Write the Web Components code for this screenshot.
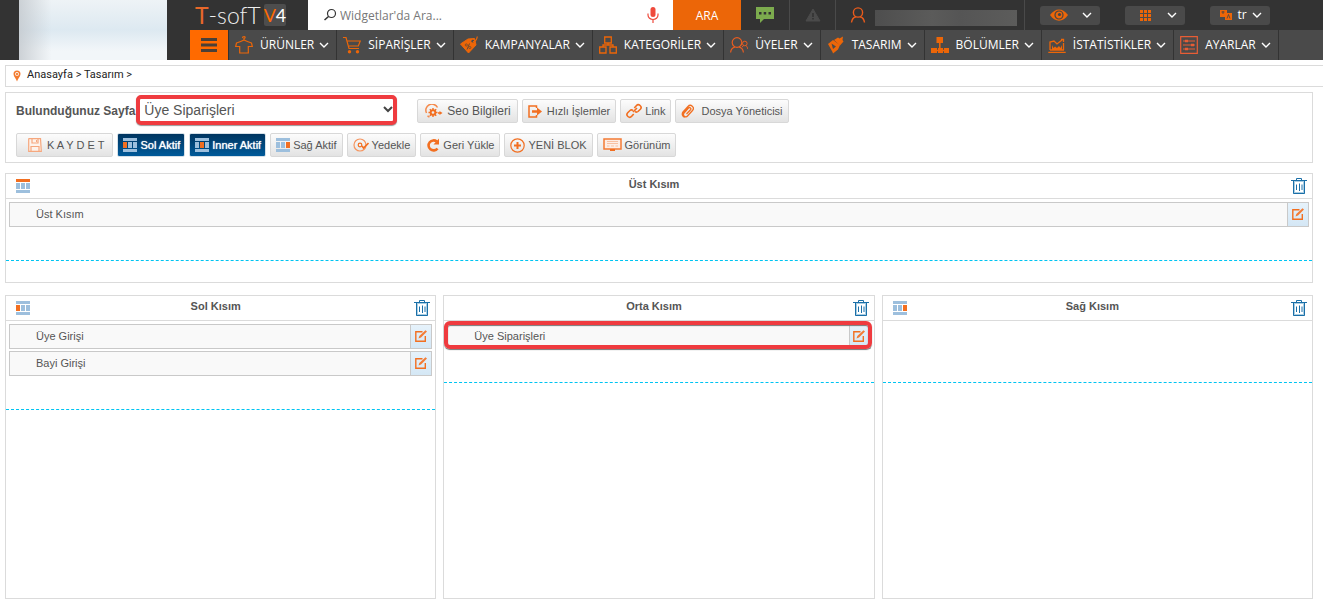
<!DOCTYPE html>
<html lang="tr">
<head>
<meta charset="utf-8">
<title>Tasarım - T-Soft V4</title>
<style>
  html, body { margin: 0; }
  body {
    font-family: "Liberation Sans", Arial, sans-serif;
    font-size: 11px;
    color: #555;
    background: #fff;
  }
</style>
</head>
<body>
<design-page></design-page>

<script>
const ICONS = {
  chevron: ['0 0 10 6', '<path d="M1 1l4 4 4-4" fill="none" stroke="#fff" stroke-width="1.4"/>'],
  search: ['0 0 14 14', '<circle cx="8.500" cy="5.500" r="4" fill="none" stroke="#333" stroke-width="1.200"/><path d="M5.500 8.500L1.500 12" stroke="#333" stroke-width="1.600"/>'],
  mic: ['0 0 12 16', '<rect x="3.5" y="0" width="5" height="10" rx="2.5" fill="#ef4a3c"/><path d="M1 6.5v1.5a5 4.5 0 0 0 10 0V6.500M6 12.500V16" fill="none" stroke="#ef4a3c" stroke-width="1.2"/>'],
  chat: ['0 0 18 16', '<path d="M0 0h18v12H8l-4 4v-4H0z" fill="#7cab4e"/><path d="M3 5h2.500v2.500H3zM7.700 5h2.500v2.500H7.700zM12.500 5H15v2.500h-2.500z" fill="#333"/>'],
  alert: ['0 0 16 14', '<path d="M8 1l7 12H1z" fill="#4b4b4b" stroke="#4b4b4b" stroke-width="1"/><path d="M7.200 5h1.600v4H7.200zM7.200 10h1.600v1.600H7.200z" fill="#333"/>'],
  user: ['0 0 16 16', '<circle cx="8" cy="5.500" r="4.600" fill="none" stroke="#ea5b1b" stroke-width="1.400"/><path d="M1.500 15.500c.5-4 3-5.500 4.500-5.800M14.500 15.500c-.5-4-3-5.500-4.500-5.800" fill="none" stroke="#ea5b1b" stroke-width="1.400"/>'],
  eye: ['0 0 18 12', '<path d="M0 6C5-1.500 13-1.500 18 6 13 13.500 5 13.500 0 6z" fill="#ec6608"/><circle cx="9" cy="6" r="4" fill="none" stroke="#444" stroke-width="1.200"/><circle cx="9.500" cy="5.500" r="1.600" fill="#444"/>'],
  grid: ['0 0 11 11', '<path d="M0 0h3v3H0zM4 0h3v3H4zM8 0h3v3H8zM0 4h3v3H0zM4 4h3v3H4zM8 4h3v3H8zM0 8h3v3H0zM4 8h3v3H4zM8 8h3v3H8z" fill="#ec6608"/>'],
  lang: ['0 0 12 10', '<path d="M0 0h7v7H0zM5 3h7v7H5z" fill="#ec6608"/><path d="M1.500 2h3M3 1v3M7 8.500l1.500-4 1.500 4" fill="none" stroke="#444" stroke-width=".8"/>'],
  menu: ['0 0 16 14', '<path d="M0 0h16v3H0zM0 5.500h16v3H0zM0 11h16v3H0z" fill="#4a4038"/>'],
  shirt: ['0 0 18 18', '<path d="M9 4C7 5 6 5.500 1.500 7L.7 10.500h4V17h8.600v-6.500h4L16.500 7C12 5.500 11 5 9 4zM9 4V2.500c1.500-.3 1.500-2-.2-1.900-1 0-1.300.8-1.100 1.400" fill="none" stroke="#ec6608" stroke-width="1.200"/>'],
  cart: ['0 0 18 18', '<path d="M0 1.500h3L6 12.500h10M4 5h13.300l-2 5H6" fill="none" stroke="#ec6608" stroke-width="1.200"/><circle cx="6.500" cy="15.700" r="1.700" fill="#ec6608"/><circle cx="14.500" cy="15.700" r="1.700" fill="#ec6608"/>'],
  tag: ['0 0 18 18', '<path d="M.5 8L8 3l6.500-.500L16 9 8.500 17z" fill="#ec6608" stroke="#ec6608"/><circle cx="12.800" cy="5.200" r="1.400" fill="#4a4a4a"/><path d="M13 5.500c2 .5 4-2 4.300-5" fill="none" stroke="#ec6608" stroke-width="1.200"/><path d="M9.500 7.500l-2.500 6" stroke="#6a4a30" stroke-width="1"/><circle cx="6.300" cy="9" r="1.100" fill="none" stroke="#6a4a30" stroke-width=".8"/><circle cx="9.800" cy="11.500" r="1.100" fill="none" stroke="#6a4a30" stroke-width=".8"/>'],
  boxes: ['0 0 18 18', '<path d="M5.700 1h6.600v6H5.700zM.7 11h6.300v6H.7zM11 11h6.300v6H11zM9 7v2M4 11V9h10v2" fill="none" stroke="#ec6608" stroke-width="1.300"/>'],
  users: ['0 0 18 18', '<circle cx="7" cy="6.500" r="4.800" fill="none" stroke="#e85d20" stroke-width="1.200"/><path d="M.6 16.500c.3-3.500 2.500-5 4.400-5.600M13.400 16.500c-.3-3.500-2.500-5-4.400-5.600" fill="none" stroke="#e85d20" stroke-width="1.200"/><circle cx="14.800" cy="7.500" r="2.300" fill="none" stroke="#e85d20"/><path d="M13.500 9.800l-1.500 1.200M16 9.800c1 .5 1.500 1.500 1.600 3" fill="none" stroke="#e85d20"/>'],
  brush: ['0 0 18 18', '<path d="M1 8l5-4 7 5-2 4.500L6 17.500l-.500-1.500z" fill="#ec6608"/><path d="M7 4l4-2.500 1.500 1L16 .5 15.500 4l1 1.500-3.500 4z" fill="#ec6608"/><path d="M4.500 7.500L9 10.500 6 13z" fill="#4a4a4a"/>'],
  tree: ['0 0 18 18', '<path d="M5.500 1h6.500v6H5.500zM0 12h6v5H0zM7 12h5v5H7zM13 12h5v5h-5z" fill="#ec6608"/><path d="M8.800 7v6M3 14.500h12" stroke="#ec6608" stroke-width="1.600"/>'],
  chart: ['0 0 18 18', '<path d="M2 14V6l4-1 3 3 5-4M13 3.500h2.500V6M15.500 7v7M2 14h14M.3 16.300h17.400" fill="none" stroke="#ec6608" stroke-width="1.300"/><path d="M4 14V9l1.500 3L7 10.500 9 12l2-2 1.500 2L14 9v5z" fill="#ec6608"/>'],
  sliders: ['0 0 18 18', '<path d="M.7.7h16.600v16.600H.7zM3 5h12M3 9h12M3 13h12" fill="none" stroke="#e85d35" stroke-width="1.200"/><path d="M5 3.700h3v2.600H5zM11 7.700h3v2.600h-3zM5 11.700h3v2.600H5z" fill="#e85d35"/>'],
  pin: ['0 0 8 12', '<path d="M4 11.500C3.500 9 .5 6.500.5 4a3.500 3.500 0 0 1 7 0C7.500 6.500 4.500 9 4 11.500z" fill="#f47b30"/><circle cx="4" cy="3.900" r="1.900" fill="#fff"/><circle cx="4" cy="3.900" r="1" fill="#ec6608"/>'],
  seo: ['0 0 18 14', '<path d="M1.500 9A5.800 5.800 0 0 1 12.500 3.500M2.500 12l2 1" fill="none" stroke="#f58a4c" stroke-width="1.500"/><circle cx="8" cy="8.500" r="2.300" fill="none" stroke="#f26f21" stroke-width="1.900"/><path d="M8 4v2M8 11v2M3.500 8.500h2M10.500 8.500h2M4.800 5.300l1.500 1.500M11.200 5.300L9.700 6.800M4.800 11.700l1.500-1.500M11.200 11.700l-1.500-1.500M13 9h3" stroke="#f26f21" stroke-width="1.400"/><path d="M14.500 7l3 2-3 2z" fill="#f26f21"/>'],
  exit: ['0 0 14 13', '<path d="M8.500 3V1H1v11h7.500v-2" fill="none" stroke="#f26f21" stroke-width="1.500"/><path d="M4 5.200h5V2.500l5 4-5 4V7.800H4z" fill="#f26f21"/>'],
  link: ['0 0 16 16', '<path d="M7 9l4-4M8.300 5l2-2.300a2.600 2.600 0 0 1 4 3.600L12 8.500c-1 .8-2 .7-3 0M7.700 11l-2 2.300a2.600 2.600 0 0 1-4-3.600L4 7.500c1-.8 2-.7 3 0" fill="none" stroke="#f26f21" stroke-width="1.600"/>'],
  clip: ['0 0 13 14', '<path d="M2 8l5-5.500a2.900 2.900 0 0 1 4.500 4L6.500 12A2.300 2.300 0 0 1 3 9l4.500-5a1.200 1.200 0 0 1 2 1.800L5.500 10M2 8c-1.500 2-.5 5 2 5" fill="none" stroke="#f26f21" stroke-width="1.300"/>'],
  floppy: ['0 0 14 14', '<path d="M1 .7h11.500L13.300 13.300H.7V1z" fill="#fef3ec" stroke="#f5a77e" stroke-width="1.200"/><path d="M4 1v4h6V1M3 13V8.500h8V13" fill="none" stroke="#f5a77e" stroke-width="1.200"/><path d="M8 2h1v2H8z" fill="#f5a77e"/>'],
  backup: ['0 0 16 14', '<circle cx="7" cy="7" r="6" fill="none" stroke="#f59560" stroke-width="1.200"/><circle cx="7" cy="7" r="1.800" fill="none" stroke="#f26f21" stroke-width="1.200"/><path d="M9 8l1.500 2 5-5" fill="none" stroke="#f26f21" stroke-width="1.600"/>'],
  restore: ['0 0 14 14', '<path d="M11.500 10.500A5 5 0 1 1 10.800 3.600" fill="none" stroke="#f26f21" stroke-width="2.600"/><path d="M13 .5v6H7.500z" fill="#f26f21"/>'],
  plus: ['0 0 15 15', '<circle cx="7.500" cy="7.500" r="6.700" fill="none" stroke="#f26f21" stroke-width="1.200"/><path d="M7.500 4v7M4 7.500h7" stroke="#f26f21" stroke-width="2"/>'],
  monitor: ['0 0 19 14', '<path d="M1 1h17v10H1z" fill="#fdeee6" stroke="#f47b35" stroke-width="1.500"/><path d="M4 3.500h11M4 5.500h11M4 8h2.500M8 8h3M12.500 8H15" stroke="#f8c0a2" stroke-width="1.200"/><path d="M7 11h5v2H7z" fill="#f26f21"/>'],
  trash: ['0 0 16 16', '<path d="M3 3h10v12H3z" fill="#fff" stroke="#a9cde2" stroke-width="2"/><path d="M0 2.500h16M5.500 2V.500h5V2M2.500 3v12.500h11V3" fill="none" stroke="#1a6fa8" stroke-width="1"/><path d="M5.500 6.500v5.500M8.500 5.500V13M11 6.500v5.500" stroke="#1a6fa8" stroke-width="1"/>'],
  edit: ['0 0 12 12', '<path d="M7.500 1.700H.8v9.500h9.500V6" fill="none" stroke="#f26f21" stroke-width="1.400"/><path d="M3.500 8.500l.8-2.500L10.500.3 12 1.500 6 7.500z" fill="#f47b35"/>'],
};

/* Page-zone pictogram: one of the five zones is highlighted. */
const zoneIcon = active => {
  const zones = { top: 'M0 0h14v3H0z', left: 'M0 4h4v6H0z', inner: 'M5 4h4v6H5z', right: 'M10 4h4v6h-4z', bottom: 'M0 11h14v3H0z' };
  return ['0 0 14 14', Object.entries(zones).map(([k, d]) =>
    `<path d="${d}" fill="${k === active ? '#f26f21' : '#9dbfdd'}"/>`).join('')];
};
for (const z of ['top', 'left', 'inner', 'right']) ICONS['zone-' + z] = zoneIcon(z);

const define = (name, render) => customElements.define(name, class extends HTMLElement {
  connectedCallback() {
    if (this.shadowRoot) return;
    const root = this.attachShadow({ mode: 'open' });
    const t = document.createElement('template');
    t.innerHTML = render(this);
    root.append(t.content.cloneNode(true));
  }
});
const at = (el, n, d = '') => el.getAttribute(n) ?? d;

define('ui-icon', el => {
  const [box, body] = ICONS[at(el, 'name')];
  const [, , w, h] = box.split(' ');
  return `<style>:host{display:block;flex:none;width:${w}px;height:${h}px}svg{display:block}</style>
    <svg width="${w}" height="${h}" viewBox="${box}" aria-hidden="true">${body}</svg>`;
});

define('brand-logo', () => `
  <style>
    :host { display: flex; align-items: center; box-sizing: border-box; padding-left: 5px; width: 118px; flex: none; }
    a { display: flex; align-items: center; gap: 3px; text-decoration: none; color: #eee;
        font: 300 23px/28px Lato, sans-serif; }
    b { font-weight: 400; color: #e8682a; }
    .v { background: #4d4d4d; border-radius: 2px; font: 400 18px/22px Lato, sans-serif; color: #fff; }
    .v b { color: #ff6a00; }
  </style>
  <a href="#"><span><b>T</b>-sofT</span><span class="v"><b>V</b>4</span></a>`);

define('search-box', () => `
  <style>
    :host { display: flex; width: 433px; flex: none; }
    form { display: flex; flex: 1; }
    label { display: flex; align-items: center; gap: 3px; flex: 1; padding: 0 14px 0 15px; background: #fff; }
    input { flex: 1; min-width: 0; border: 0; padding: 2px 0 0; outline: 0; font: 12px/18px "Open Sans", sans-serif; color: #666; background: none; }
    input::placeholder { color: #777; opacity: 1; }
    button { width: 68px; border: 0; padding: 2px 0 0; background: #ec6608; color: #fff; font: 12px/18px "Open Sans", sans-serif; }
  </style>
  <form><label><ui-icon name="search"></ui-icon><input type="text" aria-label="Ara" placeholder="Widgetlar'da Ara..."><ui-icon name="mic"></ui-icon></label>
  <button type="button">ARA</button></form>`);

define('quick-menu', el => `
  <style>
    :host { display: block; }
    button { display: flex; align-items: center; justify-content: space-between; width: 60px; height: 19px; border: 0; border-radius: 3px;
      background: #4a4a4a; color: #fff; padding: 0 8px 0 ${at(el, 'inset', '10')}px; font: 12px/18px "Open Sans", sans-serif; }
  </style>
  <button type="button" aria-label="${at(el, 'label')}"><ui-icon name="${at(el, 'icon')}"></ui-icon><slot></slot><ui-icon name="chevron"></ui-icon></button>`);

define('nav-item', el => `
  <style>
    :host { display: block; flex: none; border-right: 1px solid #333; }
    a { display: flex; align-items: center; height: 30px; padding: 0 7px 0 6px; color: #fff; text-decoration: none;
      font: 12px/18px "Open Sans", sans-serif; }
    .t { margin: 0 5px 0 7px; white-space: nowrap; }
  </style>
  <a href="#"><ui-icon name="${at(el, 'icon')}"></ui-icon><span class="t"><slot></slot></span><ui-icon name="chevron"></ui-icon></a>`);

define('app-header', () => `
  <style>
    :host { display: flex; background: #333; }
    .avatar { flex: none; width: 148px; margin: 0 23px 0 19px;
      background: linear-gradient(90deg, rgba(195,200,205,.8), rgba(255,255,255,0) 22%), linear-gradient(#eef3f6, #dde9f1 50%, #f2f6f9 85%); }
    .main { flex: 1; min-width: 0; }
    .top, nav { display: flex; height: 30px; }
    .cell { display: flex; align-items: center; justify-content: center; border: 0; border-right: 1px solid #4a4a4a; background: none; padding: 0; box-sizing: border-box; }
    .chat { width: 49px; } .alert { width: 46px; }
    .account { width: 189px; gap: 9px; padding: 0 7px 0 14px; }
    .name { flex: 1; height: 16px; margin-top: 5px; background: linear-gradient(90deg, #4e4e4e, #5b5b5a 40%, #555 60%, #5c5c5b); }
    .tools { display: flex; align-items: center; gap: 25px; padding-left: 15px; }
    nav { background: #4a4a4a; }
    .burger { width: 39px; border: 0; border-right: 1px solid #333; padding: 0; background: #ff6a00; display: flex; align-items: center; justify-content: center; flex: none; }
  </style>
  <div class="avatar"></div>
  <div class="main">
    <div class="top">
      <brand-logo></brand-logo>
      <search-box></search-box>
      <button class="cell chat" aria-label="Mesajlar"><ui-icon name="chat"></ui-icon></button>
      <button class="cell alert" aria-label="Uyarılar"><ui-icon name="alert"></ui-icon></button>
      <div class="cell account"><ui-icon name="user"></ui-icon><span class="name"></span></div>
      <div class="tools">
        <quick-menu icon="eye" label="Görünüm"></quick-menu>
        <quick-menu icon="grid" label="Uygulamalar" inset="15"></quick-menu>
        <quick-menu icon="lang" label="Dil">tr</quick-menu>
      </div>
    </div>
    <nav>
      <button class="burger" aria-label="Menü"><ui-icon name="menu"></ui-icon></button>
      <nav-item icon="shirt">ÜRÜNLER</nav-item>
      <nav-item icon="cart">SİPARİŞLER</nav-item>
      <nav-item icon="tag">KAMPANYALAR</nav-item>
      <nav-item icon="boxes">KATEGORİLER</nav-item>
      <nav-item icon="users">ÜYELER</nav-item>
      <nav-item icon="brush">TASARIM</nav-item>
      <nav-item icon="tree">BÖLÜMLER</nav-item>
      <nav-item icon="chart">İSTATİSTİKLER</nav-item>
      <nav-item icon="sliders">AYARLAR</nav-item>
    </nav>
  </div>`);

define('bread-crumb', () => `
  <style>
    :host { display: flex; align-items: center; gap: 6px; height: 20px; margin: 5px 0 0 5px; padding-left: 7px;
      border: 1px solid #dbdbdb; border-right: 0; font: 11px/16px Roboto, sans-serif; color: #222; }
    nav { padding-bottom: 2px; }
    a { color: inherit; text-decoration: none; }
  </style>
  <ui-icon name="pin"></ui-icon>
  <nav><a href="#">Anasayfa</a> &gt; <a href="#">Tasarım</a> &gt;</nav>`);

define('tool-button', el => `
  <style>
    :host { display: block; flex: none; }
    button { display: flex; align-items: center; gap: 3px; height: 24px; box-sizing: border-box; padding: 0 5px; border: 1px solid #d8d8d8; border-radius: 2px;
      background: linear-gradient(#fcfcfc, #e3e3e3); color: #555; font: 11px/16px "Liberation Sans", Arial, sans-serif; white-space: nowrap; }
    :host([active]) button { padding: 0 4px 0 5px; border-color: #d5e0e8; background: linear-gradient(#003560, #005a9a); color: #fff; text-shadow: 0 0 1px #fff; }
    :host([size="wide"]) button { gap: 5px; padding: 0 8px 0 11px; }
    :host([size="large"]) button { gap: 4px; padding: 0 6px 0 7px; font-size: 12px; }
    :host([size="medium"]) button { gap: 5px; }
    :host([size="roomy"]) button { gap: 7px; }
  </style>
  <button type="button"><ui-icon name="${at(el, 'icon')}"></ui-icon><span><slot></slot></span></button>`);

define('tool-bar', () => `
  <style>
    :host { display: block; margin: 5px 10px 0 5px; padding: 2px 10px 5px; border: 1px solid #dbdbdb; }
    .row { display: flex; align-items: center; gap: 4px; }
    .first { margin-bottom: 6px; }
    label { font-weight: bold; font-size: 12px; line-height: 16px; margin-right: -3px; }
    .pick { position: relative; width: 261px; height: 32px; margin-right: 16px; }
    select { appearance: none; display: block; width: 100%; height: 30px; box-sizing: border-box; padding: 0 20px 0 4px; border: 4px solid #ef3b3f; border-radius: 5px;
      background: #fff; color: #555; font: 14px/20px "Liberation Sans", Arial, sans-serif; box-shadow: 0 1px 1px #999; }
    svg { position: absolute; right: 4px; top: 11px; }
  </style>
  <div class="row first">
    <label for="page">Bulunduğunuz Sayfa</label>
    <div class="pick">
      <select id="page"><option>Üye Siparişleri</option></select>
      <svg width="10" height="7" viewBox="0 0 10 7"><path d="M1 1l4 4 4-4" fill="none" stroke="#444" stroke-width="2"/></svg>
    </div>
    <tool-button icon="seo" size="large">Seo Bilgileri</tool-button>
    <tool-button icon="exit" size="medium">Hızlı İşlemler</tool-button>
    <tool-button icon="link">Link</tool-button>
    <tool-button icon="clip" size="roomy">Dosya Yöneticisi</tool-button>
  </div>
  <div class="row">
    <tool-button icon="floppy" size="wide">K A Y D E T</tool-button>
    <tool-button icon="zone-left" active>Sol Aktif</tool-button>
    <tool-button icon="zone-inner" active>Inner Aktif</tool-button>
    <tool-button icon="zone-right">Sağ Aktif</tool-button>
    <tool-button icon="backup">Yedekle</tool-button>
    <tool-button icon="restore">Geri Yükle</tool-button>
    <tool-button icon="plus">YENİ BLOK</tool-button>
    <tool-button icon="monitor">Görünüm</tool-button>
  </div>`);

define('block-row', () => `
  <style>
    :host { display: flex; position: relative; height: 23px; border: 1px solid #c9c9c9; background: #f9f9f9; line-height: 23px; }
    span { flex: 1; padding-left: 26px; }
    button { display: flex; align-items: center; justify-content: center; width: 21px; border: 0; border-left: 1px solid #c9c9c9; padding: 0 1px 1px 0; background: linear-gradient(#e6f2fb, #d4e7f5); }
    :host([marked])::after { content: ""; position: absolute; inset: -4px -2px -1px -4px; border: 4px solid #ef3b3f; border-radius: 6px; box-shadow: 0 1px 1px #777, inset 0 1px 1px #777; }
  </style>
  <span><slot></slot></span><button type="button" aria-label="Düzenle"><ui-icon name="edit"></ui-icon></button>`);

define('layout-panel', el => `
  <style>
    :host { display: block; border: 1px solid #dbdbdb; }
    header { display: grid; grid-template-columns: 32px 1fr 42px; align-items: center; height: 24px; border-bottom: 1px solid #dbdbdb; }
    header > :first-child { padding-left: 10px; }
    h2 { margin: 0; padding-bottom: 4px; font-size: 11px; line-height: 16px; text-align: center; }
    button { justify-self: end; border: 0; padding: 0 5px 1px 0; background: none; }
    .list { display: flex; flex-direction: column; gap: 2px; min-height: 25px; padding: 3px 3px 33px; border-bottom: 1px dashed #00c4f2; }
    .rest { height: 21px; }
  </style>
  <header><div>${at(el, 'icon') && `<ui-icon name="${at(el, 'icon')}"></ui-icon>`}</div><h2>${at(el, 'heading')}</h2>
  <button type="button" aria-label="Sil"><ui-icon name="trash"></ui-icon></button></header>
  <div class="list"><slot></slot></div><div class="rest"></div>`);

define('design-page', () => `
  <style>
    :host { display: flex; flex-direction: column; min-height: 100vh; box-sizing: border-box; padding-bottom: 10px; }
    main { flex: 1; display: flex; flex-direction: column; gap: 12px; margin: 10px 10px 0 5px; }
    .cols { flex: 1; display: grid; grid-template-columns: repeat(3, 1fr); gap: 7px; }
  </style>
  <app-header></app-header>
  <bread-crumb></bread-crumb>
  <tool-bar></tool-bar>
  <main>
    <layout-panel icon="zone-top" heading="Üst Kısım"><block-row>Üst Kısım</block-row></layout-panel>
    <div class="cols">
      <layout-panel icon="zone-left" heading="Sol Kısım"><block-row>Üye Girişi</block-row><block-row>Bayi Girişi</block-row></layout-panel>
      <layout-panel heading="Orta Kısım"><block-row marked>Üye Siparişleri</block-row></layout-panel>
      <layout-panel icon="zone-right" heading="Sağ Kısım"></layout-panel>
    </div>
  </main>`);
</script>
</body>
</html>
